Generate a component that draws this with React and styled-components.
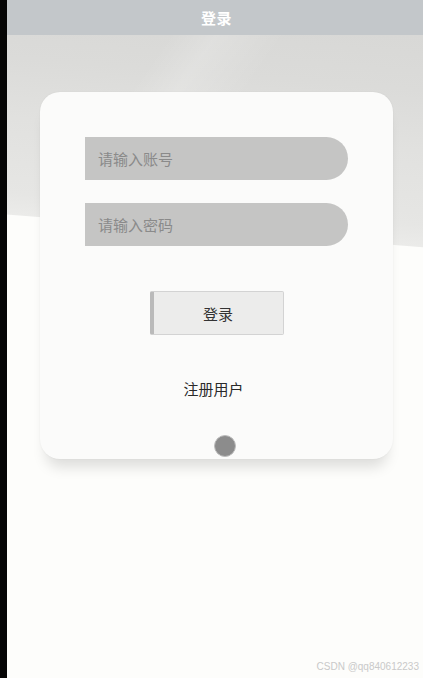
import React from 'react';
import styled, { createGlobalStyle } from 'styled-components';

const GlobalStyle = createGlobalStyle`
  html, body {
    margin: 0;
    padding: 0;
    background: #000;
  }
  body {
    font-family: "Noto Sans CJK SC", "Noto Sans", sans-serif;
  }
`;

const Shell = styled.div`
  display: flex;
  width: 423px;
  height: 678px;
  overflow: hidden;
  background: #000;
`;

const Edge = styled.div`
  flex: 0 0 7px;
  background: #050505;
`;

const Screen = styled.div`
  flex: 1;
  display: flex;
  flex-direction: column;
  background:
    linear-gradient(125deg, rgba(255, 255, 255, 0) 35%, rgba(255, 255, 255, 0.18) 45%, rgba(255, 255, 255, 0) 60%) 0 35px / 100% 70px no-repeat,
    linear-gradient(184.5deg, #d6d6d4 0, #dbdbd9 90px, #e1e1df 150px, #e6e6e4 225px, #ebebe9 246px, #fdfdfb 247px);
`;

const Header = styled.header`
  flex: 0 0 35px;
  display: flex;
  align-items: center;
  justify-content: center;
  padding-left: 3px;
  background: #c3c7ca;
  color: #fff;
  font-size: 15px;
  font-weight: 700;
  letter-spacing: 0.5px;
`;

const Body = styled.main`
  flex: 1;
  display: flex;
  flex-direction: column;
  padding: 57px 30px 0 33px;
`;

const Card = styled.section`
  display: flex;
  flex-direction: column;
  align-items: center;
  padding: 45px 0 2px;
  background: #fbfbfa;
  border-radius: 20px;
  box-shadow: 0 14px 14px -6px rgba(0, 0, 0, 0.13), 0 0 2px rgba(0, 0, 0, 0.06);
`;

const Field = styled.input`
  box-sizing: border-box;
  width: 263px;
  height: 43px;
  margin-bottom: ${(p) => p.$gap}px;
  padding: 0 13px;
  border: none;
  border-radius: 0 22px 22px 0;
  background: #c5c5c4;
  font-family: inherit;
  font-size: 15px;
  color: #555;
  outline: none;

  &::placeholder {
    color: #8a8a8a;
  }
`;

const LoginButton = styled.button`
  box-sizing: border-box;
  width: 134px;
  height: 44px;
  margin-top: 23px;
  border: 1px solid #d3d3d3;
  border-left: 4px solid #bababa;
  border-radius: 2px;
  background: #ececeb;
  font-family: inherit;
  font-size: 15px;
  color: #333;
`;

const RegisterLink = styled.a`
  margin-top: 43px;
  font-size: 15px;
  line-height: 21px;
  color: #2a2a2a;
  text-decoration: none;
  transform: translateX(-3px);
`;

const Dot = styled.span`
  width: 20px;
  height: 20px;
  margin-top: 36px;
  margin-left: 17px;
  border-radius: 50%;
  background: #8c8c8c;
  border: 1px solid #bdbdbd;
`;

const Watermark = styled.footer`
  margin-top: auto;
  padding: 0 4px 6px 0;
  text-align: right;
  font-family: "Liberation Sans", Arial, sans-serif;
  font-size: 10px;
  color: #c9c9c9;
`;

export default function App() {
  return (
    <>
      <GlobalStyle />
      <Shell>
        <Edge />
        <Screen>
          <Header>登录</Header>
          <Body>
            <Card>
              <Field $gap={23} placeholder="请输入账号" />
              <Field $gap={22} type="password" placeholder="请输入密码" />
              <LoginButton>登录</LoginButton>
              <RegisterLink href="#">注册用户</RegisterLink>
              <Dot />
            </Card>
          </Body>
          <Watermark>CSDN @qq840612233</Watermark>
        </Screen>
      </Shell>
    </>
  );
}
